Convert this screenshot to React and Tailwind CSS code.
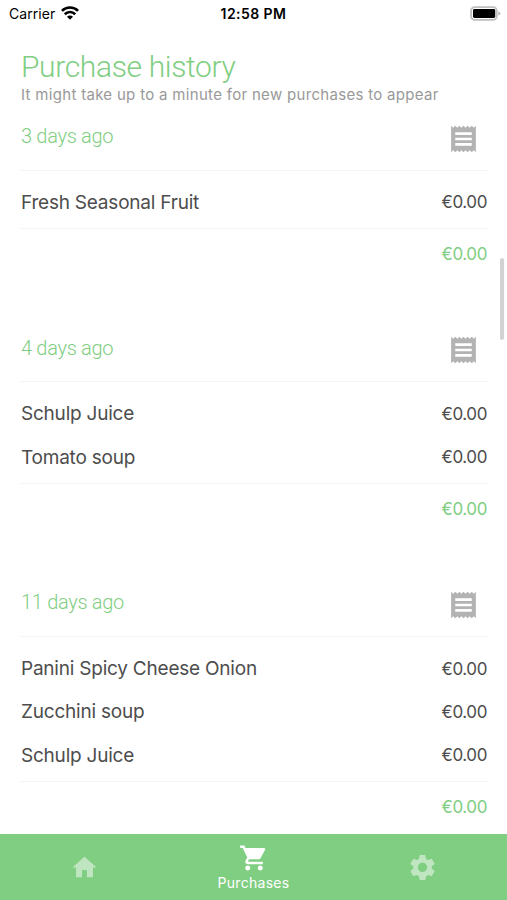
import { MdHome, MdReceipt, MdSettings, MdShoppingCart } from "react-icons/md";

const days = [
  { label: "3 days ago", items: ["Fresh Seasonal Fruit"] },
  { label: "4 days ago", items: ["Schulp Juice", "Tomato soup"] },
  { label: "11 days ago", items: ["Panini Spicy Cheese Onion", "Zucchini soup", "Schulp Juice"] },
];

function StatusBar() {
  return (
    <header className="relative flex h-[26px] shrink-0 items-center justify-between pr-[6px] pl-[9px] text-black">
      <div className="flex items-center gap-[6px]">
        <span className="text-[14px] tracking-[0.05px]">Carrier</span>
        <svg className="h-[14px] w-[18px]" viewBox="0 0 18 14" fill="none" stroke="currentColor" strokeWidth="2.7">
          <path d="M0.9 4.9a11.4 11.4 0 0 1 16.2 0" />
          <path d="M3.8 8.2a7.3 7.3 0 0 1 10.4 0" />
          <path d="M9 13.7 6 10.7a4.2 4.2 0 0 1 6 0Z" fill="currentColor" stroke="none" />
        </svg>
      </div>
      <span className="absolute left-1/2 -translate-x-1/2 text-[14px] font-semibold tracking-[0.45px] whitespace-nowrap">12:58 PM</span>
      <svg className="h-[15px] w-[31px]" viewBox="0 0 31 15">
        <rect x="1.1" y="1.1" width="25.6" height="12.8" rx="3.6" fill="#fff" stroke="#bfbfbf" strokeWidth="1.9" />
        <rect x="3" y="3" width="22.2" height="9" rx="1.4" fill="#000" />
        <path d="M28.4 5.2q1.9 0.8 1.9 2.3t-1.9 2.3Z" fill="#b5b5b5" />
      </svg>
    </header>
  );
}

function Day({ label, items }) {
  return (
    <section className="pb-[47.1px]">
      <div className="flex h-[55px] items-start justify-between border-b border-[#f3f3f3] pr-[8px]">
        <h2 className="mt-[6.4px] font-['Roboto',sans-serif] text-[20px] leading-7 font-light tracking-[-0.3px] text-[#7fce82]">{label}</h2>
        <MdReceipt preserveAspectRatio="none" className="mt-[6.5px] h-[32px] w-[33px] text-[#b3b3b3]" />
      </div>
      <ul className="border-b border-[#f3f3f3] pt-[10.6px] pb-[3.2px]">
        {items.map((name) => (
          <li key={name} className="flex h-[43.3px] items-center justify-between text-[#4d4d4d]">
            <span className="text-[19px] tracking-[-0.22px]">{name}</span>
            <span className="pr-px text-[17px] tracking-[-0.4px]">€0.00</span>
          </li>
        ))}
      </ul>
      <p className="flex h-[51.2px] items-center justify-end pr-px text-[17px] tracking-[-0.4px] text-[#7fce82]">€0.00</p>
    </section>
  );
}

export default function App() {
  return (
    <div className="relative flex h-[900px] w-[507px] flex-col overflow-hidden bg-white font-['Inter',sans-serif]">
      <StatusBar />
      <main className="min-h-0 flex-1 overflow-hidden pr-[19px] pl-[21px]">
        <h1 className="mt-[21px] font-['Roboto',sans-serif] text-[30px] leading-10 font-light tracking-[-0.35px] text-[#7fce82]">Purchase history</h1>
        <p className="text-[15px] leading-[16px] tracking-[0.31px] whitespace-nowrap text-[#999]">It might take up to a minute for new purchases to appear</p>
        <div className="mt-[13px]">
          {days.map((day) => (
            <Day key={day.label} {...day} />
          ))}
        </div>
      </main>
      <div className="absolute top-[258px] right-[3.5px] h-[82px] w-[4px] rounded-full bg-[#d2d2d2]" />
      <nav className="grid h-[66px] shrink-0 grid-cols-3 bg-[#80ce82] text-white">
        <div className="flex items-center justify-center">
          <MdHome className="size-[29px] opacity-50" />
        </div>
        <div className="flex flex-col items-center pt-[9px]">
          <MdShoppingCart className="size-[30px]" />
          <span className="text-[14px] leading-5 tracking-[0.3px]">Purchases</span>
        </div>
        <div className="flex items-center justify-center">
          <MdSettings className="size-[31px] opacity-50" />
        </div>
      </nav>
    </div>
  );
}
